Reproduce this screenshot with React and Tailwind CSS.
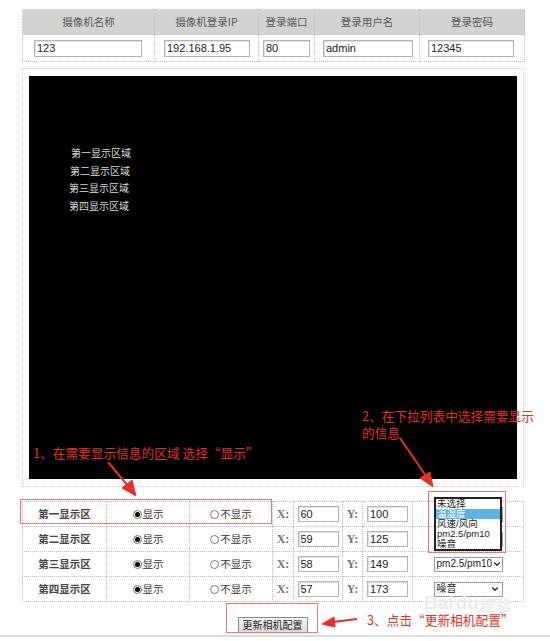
import React from 'react';
import { ChevronDown } from 'lucide-react';

const cjk = "font-['Noto_Sans_CJK_SC',sans-serif]";
const latin = "font-['Liberation_Sans','Noto_Sans_CJK_SC',sans-serif]";

const TextBox = ({ value, className }) => (
  <input
    readOnly
    defaultValue={value}
    className={`block border border-[#b4b4b4] bg-white px-[2px] text-[11px] leading-none text-[#222] outline-none shadow-[inset_1px_1px_0_#e2e2e2] ${latin} ${className}`}
  />
);

const Radio = ({ checked, label }) => (
  <span className="flex items-center justify-center gap-[1px] text-[10.5px] leading-none text-[#333]">
    <span className="flex h-[9px] w-[9px] items-center justify-center rounded-full border border-[#777] bg-white">
      {checked && <span className="h-[5px] w-[5px] rounded-full bg-black" />}
    </span>
    {label}
  </span>
);

const FakeSelect = ({ value }) => (
  <div className={`mx-auto flex h-[15px] w-[69px] items-center justify-between border border-[#9a9a9a] bg-white pl-[2px] pr-[2px] text-[10px] leading-none text-[#222] ${latin}`}>
    <span className="whitespace-nowrap">{value}</span>
    <ChevronDown size={10} strokeWidth={2.8} className="shrink-0 text-[#222]" />
  </div>
);

const headers = ['摄像机名称', '摄像机登录IP', '登录端口', '登录用户名', '登录密码'];

const rows = [
  { name: '第一显示区', x: '60', y: '100', sel: '未选择' },
  { name: '第二显示区', x: '59', y: '125', sel: '未选择' },
  { name: '第三显示区', x: '58', y: '149', sel: 'pm2.5/pm10' },
  { name: '第四显示区', x: '57', y: '173', sel: '噪音' },
];

const options = ['未选择', '温湿度', '风速/风向', 'pm2.5/pm10', '噪音'];

const cell = 'border border-dotted border-[#bdbdbd] p-0';

// centred flex box inside a 24px table row
const Box = ({ children, className = '' }) => (
  <div className={`flex h-[24px] items-center justify-center ${className}`}>{children}</div>
);

export default function App() {
  return (
    <div className={`relative h-[641px] w-[550px] overflow-hidden bg-white ${cjk}`}>
      <div className="ml-[22px] w-[502px] pt-[9px]">
        {/* Camera login table */}
        <table className="w-[502px] table-fixed border-collapse">
          <colgroup>
            <col className="w-[132px]" />
            <col className="w-[104px]" />
            <col className="w-[56px]" />
            <col className="w-[105px]" />
            <col className="w-[105px]" />
          </colgroup>
          <thead>
            <tr className="h-[25px] bg-[#d3d3d3]">
              {headers.map((h) => (
                <th key={h} className={`${cell} text-center text-[10.5px] font-normal leading-none text-[#555]`}>
                  {h}
                </th>
              ))}
            </tr>
          </thead>
          <tbody>
            <tr className="h-[27px]">
              <td className={cell}><TextBox value="123" className="ml-[11px] h-[17px] w-[108px]" /></td>
              <td className={cell}><TextBox value="192.168.1.95" className="ml-[9px] h-[17px] w-[86px]" /></td>
              <td className={cell}><TextBox value="80" className="ml-[4px] h-[17px] w-[47px]" /></td>
              <td className={cell}><TextBox value="admin" className="ml-[8px] h-[17px] w-[90px]" /></td>
              <td className={cell}><TextBox value="12345" className="ml-[8px] h-[17px] w-[86px]" /></td>
            </tr>
          </tbody>
        </table>

        {/* Preview area */}
        <div className="mt-[6px] border border-dotted border-[#c8c8c8] px-[6px] py-[7px]">
          <div className="h-[403px] bg-black pt-[68px] text-[10px] leading-[17.5px] text-[#dcdcdc]">
            <div className="ml-[42px]">第一显示区域</div>
            <div className="ml-[41px]">第二显示区域</div>
            <div className="ml-[40px]">第三显示区域</div>
            <div className="ml-[40px]">第四显示区域</div>
          </div>
        </div>

        {/* Region settings table */}
        <table className="mt-[14px] w-[501px] table-fixed border-collapse">
          <colgroup>
            <col className="w-[84px]" />
            <col className="w-[83px]" />
            <col className="w-[83px]" />
            <col className="w-[21px]" />
            <col className="w-[49px]" />
            <col className="w-[20px]" />
            <col className="w-[50px]" />
            <col className="w-[111px]" />
          </colgroup>
          <tbody>
            {rows.map((r) => (
              <tr key={r.name}>
                <td className={cell}>
                  <Box className="text-[10.5px] font-bold leading-none text-[#444]">{r.name}</Box>
                </td>
                <td className={cell}><Box><Radio checked label="显示" /></Box></td>
                <td className={cell}><Box><Radio label="不显示" /></Box></td>
                <td className={cell}>
                  <Box className="font-['Liberation_Serif',serif] text-[12px] font-bold leading-none text-[#777]">X:</Box>
                </td>
                <td className={cell}><Box><TextBox value={r.x} className="h-[16px] w-[41px]" /></Box></td>
                <td className={cell}>
                  <Box className="font-['Liberation_Serif',serif] text-[12px] font-bold leading-none text-[#777]">Y:</Box>
                </td>
                <td className={cell}><Box><TextBox value={r.y} className="h-[16px] w-[41px]" /></Box></td>
                <td className={cell}><Box><FakeSelect value={r.sel} /></Box></td>
              </tr>
            ))}
          </tbody>
        </table>

        <div className="mt-[15px] flex justify-center pr-[1px]">
          <button className="flex h-[16px] w-[70px] items-center justify-center border border-[#8a8a8a] bg-gradient-to-b from-[#f4f4f4] to-[#dcdcdc] p-0 text-[10px] leading-none text-[#222]">
            更新相机配置
          </button>
        </div>
      </div>

      <div className="absolute left-0 right-0 top-[635px] h-[2px] bg-[#dedede]" />

      {/* Open dropdown list */}
      <div className={`absolute left-[434px] top-[497px] flex w-[68px] flex-col border-2 border-[#222] bg-white text-[9.5px] text-[#222] ${latin}`}>
        {options.map((o, i) => (
          <div key={o} className={`flex h-[10px] items-center whitespace-nowrap pl-[1px] leading-none ${i === 1 ? 'bg-[#5eb3e4] text-white' : ''}`}>
            {o}
          </div>
        ))}
      </div>

      {/* Red annotation boxes */}
      <div className="absolute left-[20px] top-[499px] h-[25px] w-[252px] border border-[#f07474]" />
      <div className="absolute left-[428px] top-[491px] h-[62px] w-[78px] border border-[#f07474]" />
      <div className="absolute left-[226px] top-[603px] h-[30px] w-[92px] border border-[#f07474]" />

      {/* Annotation texts */}
      <div className="absolute left-[33px] top-[445px] whitespace-nowrap text-[12.7px] leading-[16px] text-[#e2302c]">
        1、在需要显示信息的区域 选择“显示”
      </div>
      <div className="absolute left-[362px] top-[407px] whitespace-nowrap text-[12.7px] leading-[17px] text-[#e2302c]">
        2、在下拉列表中选择需要显示
        <br />
        的信息
      </div>
      <div className="absolute left-[367px] top-[612px] whitespace-nowrap text-[12.7px] leading-[16px] text-[#e2302c]">
        3、点击“更新相机配置”
      </div>

      {/* Watermark */}
      <div className="pointer-events-none absolute left-[424px] top-[593px] flex items-end gap-[2px] text-[#ececec]">
        <span className={`text-[19px] font-bold leading-none ${latin}`}>Bai</span>
        <span className={`text-[19px] font-bold leading-none ${latin}`}>du</span>
        <span className="text-[15px] font-bold leading-none">经验</span>
      </div>

      {/* Arrows */}
      <svg className="pointer-events-none absolute left-0 top-0" width="550" height="641">
        <g fill="#e8302a" stroke="#e8302a">
          <line x1="108" y1="462" x2="128" y2="486" strokeWidth="2" />
          <polygon points="136,496 122,488 132,480" strokeWidth="1" />
          <line x1="400" y1="438" x2="426" y2="476" strokeWidth="2" />
          <polygon points="433,487 420,478 430,472" strokeWidth="1" />
          <line x1="357" y1="619" x2="333" y2="622" strokeWidth="2" />
          <polygon points="322,624 334,617 335,627" strokeWidth="1" />
        </g>
      </svg>
    </div>
  );
}
